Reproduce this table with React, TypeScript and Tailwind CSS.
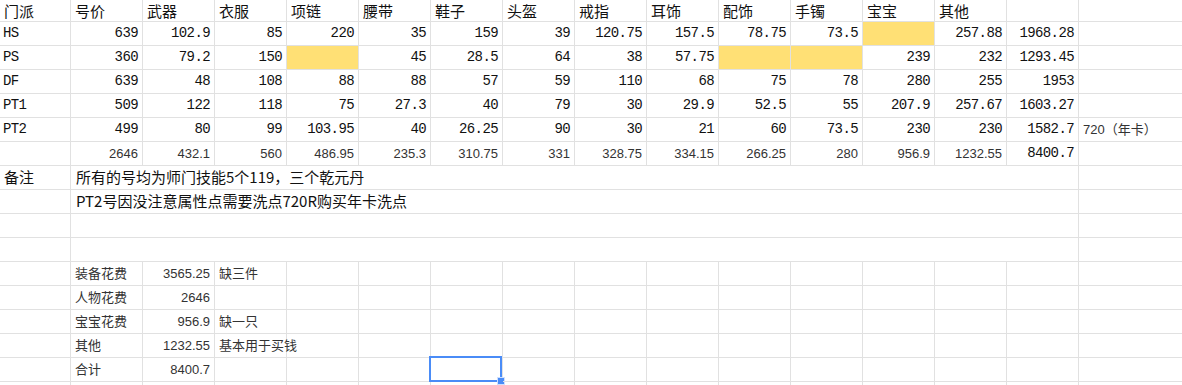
import React from "react";

const line = "border-r border-b border-[#e1e1e1]";
const mono = "font-['Liberation_Mono','Noto_Sans_CJK_SC',monospace] text-[14px] tracking-[-0.6px] text-[#111]";
const cjk = "font-['Noto_Sans_CJK_SC',sans-serif] text-[15px] text-[#111]";
const sans = "font-['Liberation_Sans','Noto_Sans_CJK_SC',sans-serif] text-[13px] text-[#333]";

type Cell = string | null | "Y";

const headers = ["门派", "号价", "武器", "衣服", "项链", "腰带", "鞋子", "头盔", "戒指", "耳饰", "配饰", "手镯", "宝宝", "其他", ""];

const rows: { name: string; vals: Cell[]; note?: string }[] = [
  { name: "HS", vals: ["639", "102.9", "85", "220", "35", "159", "39", "120.75", "157.5", "78.75", "73.5", "Y", "257.88", "1968.28"] },
  { name: "PS", vals: ["360", "79.2", "150", "Y", "45", "28.5", "64", "38", "57.75", "Y", "Y", "239", "232", "1293.45"] },
  { name: "DF", vals: ["639", "48", "108", "88", "88", "57", "59", "110", "68", "75", "78", "280", "255", "1953"] },
  { name: "PT1", vals: ["509", "122", "118", "75", "27.3", "40", "79", "30", "29.9", "52.5", "55", "207.9", "257.67", "1603.27"] },
  { name: "PT2", vals: ["499", "80", "99", "103.95", "40", "26.25", "90", "30", "21", "60", "73.5", "230", "230", "1582.7"], note: "720（年卡）" },
];

const totals = ["2646", "432.1", "560", "486.95", "235.3", "310.75", "331", "328.75", "334.15", "266.25", "280", "956.9", "1232.55"];

const notes = ["所有的号均为师门技能5个119，三个乾元丹", "PT2号因没注意属性点需要洗点720R购买年卡洗点", "", ""];

const summary: [string, string, string][] = [
  ["装备花费", "3565.25", "缺三件"],
  ["人物花费", "2646", ""],
  ["宝宝花费", "956.9", "缺一只"],
  ["其他", "1232.55", "基本用于买钱"],
  ["合计", "8400.7", ""],
];

function Row({ children, h = "h-[24px]" }: { children: React.ReactNode; h?: string }) {
  return <div className={`grid grid-cols-[71px_repeat(14,72px)_1fr] ${h}`}>{children}</div>;
}

// last column has no right edge
const lastCell = "border-b border-[#e1e1e1]";

export default function App() {
  return (
    <div className="w-[1182px] h-[385px] overflow-hidden bg-white">
      {/* header */}
      <Row h="h-[22px]">
        {headers.map((t, i) => (
          <div key={i} className={`${line} ${cjk} px-[4px] flex items-center whitespace-nowrap leading-none`}>
            {t}
          </div>
        ))}
        <div className={lastCell} />
      </Row>

      {rows.map((r) => (
        <Row key={r.name}>
          <div className={`${line} ${mono} px-[3px] flex items-center`}>{r.name}</div>
          {r.vals.map((v, i) =>
            v === "Y" ? (
              <div key={i} className={`${line} bg-[#ffe075]`} />
            ) : (
              <div key={i} className={`${line} ${mono} pr-[4px] flex items-center justify-end`}>{v}</div>
            )
          )}
          <div className={`${lastCell} ${sans} px-[4px] flex items-center whitespace-nowrap`}>{r.note}</div>
        </Row>
      ))}

      {/* totals */}
      <Row>
        <div className={line} />
        {totals.map((v, i) => (
          <div key={i} className={`${line} ${sans} pr-[4px] flex items-center justify-end`}>{v}</div>
        ))}
        <div className={`${line} ${mono} pr-[4px] flex items-center justify-end`}>8400.7</div>
        <div className={lastCell} />
      </Row>

      {/* notes, B:O merged */}
      {notes.map((n, i) => (
        <Row key={i}>
          <div className={`${line} ${cjk} px-[4px] flex items-center`}>{i === 0 ? "备注" : ""}</div>
          <div className={`${line} ${cjk} col-span-14 px-[5px] flex items-center whitespace-nowrap`}>{n}</div>
          <div className={lastCell} />
        </Row>
      ))}

      {/* summary */}
      {summary.map(([label, val, remark], i) => (
        <Row key={label}>
          <div className={line} />
          <div className={`${line} ${sans} px-[4px] flex items-center`}>{label}</div>
          <div className={`${line} ${sans} pr-[4px] flex items-center justify-end`}>{val}</div>
          <div className={`${line} ${sans} px-[4px] flex items-center whitespace-nowrap`}>{remark}</div>
          {Array.from({ length: 11 }).map((_, j) => (
            <div key={j} className={`${line} relative`}>
              {i === 4 && j === 2 && (
                <div className="absolute -left-[2px] -top-[2px] right-0 -bottom-[1px] border-2 border-[#4a8cf7]">
                  <div className="absolute -right-[5px] -bottom-[5px] w-[8px] h-[8px] bg-[#4a8cf7] border border-[#cddfff]" />
                </div>
              )}
            </div>
          ))}
          <div className={lastCell} />
        </Row>
      ))}
      <Row>
        {Array.from({ length: 15 }).map((_, j) => (
          <div key={j} className={line} />
        ))}
        <div className={lastCell} />
      </Row>
    </div>
  );
}
